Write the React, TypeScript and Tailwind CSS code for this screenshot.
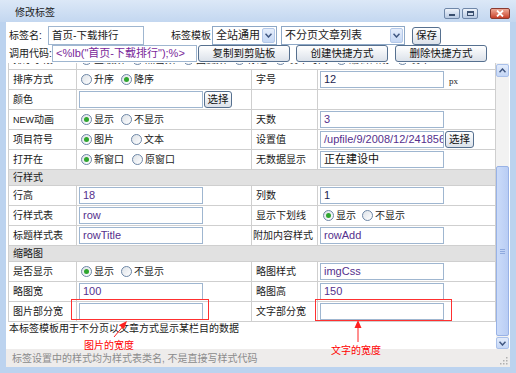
import React from 'react'

// shared bits
function Radio({ on }: { on?: boolean }) {
  return (
    <span className="inline-flex h-[11px] w-[11px] shrink-0 items-center justify-center rounded-full border border-[#6e87a6] bg-linear-to-br from-[#dde2e8] to-white">
      {on && <span className="h-[5px] w-[5px] rounded-full bg-[#2fa62f]" />}
    </span>
  )
}

function Opt({ on, label, space = 'mr-[7px]' }: { on?: boolean; label: string; space?: string }) {
  return (
    <span className={`flex items-center ${space}`}>
      <Radio on={on} />
      <span className="ml-[2px] whitespace-nowrap">{label}</span>
    </span>
  )
}

function Inp({ v = '', w = 'w-[124px]', color = 'text-[#55308d]' }: { v?: string; w?: string; color?: string }) {
  return (
    <div className={`${w} flex h-[17px] shrink-0 items-center overflow-hidden whitespace-nowrap border border-[#9fb6d0] bg-white px-[3px] font-['Liberation_Sans','Noto_Sans_CJK_SC',sans-serif] text-[11px] ${color}`}>
      {v}
    </div>
  )
}

function Btn({ children, w, h = 'h-[17px]' }: { children: React.ReactNode; w: string; h?: string }) {
  return (
    <div className={`${w} ${h} flex shrink-0 items-center justify-center rounded-[3px] border border-[#56708f] bg-linear-to-b from-white to-[#dce2ea] text-[10.5px] text-[#111]`}>
      {children}
    </div>
  )
}

function Chevron({ up }: { up?: boolean }) {
  return (
    <svg width="7" height="5" viewBox="0 0 7 5">
      <path d={up ? 'M0.5 4.2 L3.5 1 L6.5 4.2' : 'M0.5 0.8 L3.5 4 L6.5 0.8'} stroke="#3f5680" strokeWidth="1.5" fill="none" />
    </svg>
  )
}

function Select({ text, w }: { text: string; w: string }) {
  return (
    <div className={`${w} flex h-[19px] shrink-0 items-center border border-[#8ea8c6] bg-white text-[11px]`}>
      <span className="flex-1 overflow-hidden whitespace-nowrap pl-[3px]">{text}</span>
      <span className="mr-[1px] flex h-[15px] w-[13px] items-center justify-center rounded-[2px] border border-[#b4c8e8] bg-linear-to-b from-[#e6eefb] to-[#c5d7f4]">
        <Chevron />
      </span>
    </div>
  )
}

const td = 'border border-[#cfcfcf] p-0 h-[20px] align-middle'
const lab = `${td} pl-[4px] whitespace-nowrap`
const head = 'border border-[#cfcfcf] p-0 pl-[4px] h-[15px] bg-[#e1e1e1] align-middle'

export default function App() {
  return (
    <div className="relative flex h-[373px] w-[516px] flex-col overflow-hidden bg-[#bcd3ef] font-['Liberation_Sans','Noto_Sans_CJK_SC',sans-serif] text-[10px] text-[#1a1a1a]">
      {/* title bar */}
      <div className="flex h-[22px] shrink-0 items-start justify-between bg-linear-to-b from-[#dce8f7] to-[#c3d7f0]">
        <span className="ml-[15px] mt-[5px] text-[10px] text-[#1e1e1e]">修改标签</span>
        <div className="mr-[6px] mt-[8px] flex gap-[2px]">
          <div className="flex h-[11px] w-[16px] items-end justify-center rounded-[2px] border border-[#6f87a8] bg-linear-to-b from-[#eef3fa] to-[#b8cae3] pb-[2px]">
            <span className="h-[2px] w-[6px] bg-[#3a4f6e]" />
          </div>
          <div className="flex h-[11px] w-[16px] items-center justify-center rounded-[2px] border border-[#6f87a8] bg-linear-to-b from-[#eef3fa] to-[#b8cae3]">
            <span className="h-[5px] w-[7px] border border-t-2 border-[#3a4f6e]" />
          </div>
          <div className="ml-[10px] flex h-[11px] w-[20px] items-center justify-center rounded-[2px] border border-[#8a3a30] bg-linear-to-b from-[#eeaa98] to-[#c73d28]">
            <svg width="8" height="7" viewBox="0 0 8 7">
              <path d="M1 0.5 L7 6.5 M7 0.5 L1 6.5" stroke="#fff" strokeWidth="1.8" />
            </svg>
          </div>
        </div>
      </div>

      {/* window body */}
      <div className="mx-[6px] mb-[6px] flex flex-1 flex-col bg-white">
        <div className="flex h-[41px] shrink-0 flex-col pt-[4px]">
          <div className="flex h-[19px] items-center">
            <span className="ml-[3px] w-[39px]">标签名:</span>
            <div className="flex h-[19px] w-[96px] items-center border border-[#9fb6d0] px-[3px] text-[10.5px]">首页-下载排行</div>
            <span className="ml-[27px] w-[40px]">标签模板</span>
            <span className="ml-[1px]"><Select text="全站通用" w="w-[65px]" /></span>
            <span className="ml-[4px]"><Select text="不分页文章列表" w="w-[124px]" /></span>
            <span className="ml-[7px]"><Btn w="w-[29px]" h="h-[18px]">保存</Btn></span>
          </div>
          <div className="flex h-[17px] items-center">
            <span className="ml-[3px] w-[43px]">调用代码:</span>
            <Inp v={'<%lb("首页-下载排行");%>'} w="w-[145px]" color="text-[#7a1f9a]" />
            <span className="ml-[1px]"><Btn w="w-[92px]">复制到剪贴板</Btn></span>
            <span className="ml-[6px]"><Btn w="w-[92px]">创建快捷方式</Btn></span>
            <span className="ml-[7px]"><Btn w="w-[92px]">删除快捷方式</Btn></span>
          </div>
        </div>

        {/* scrolling settings area */}
        <div className="flex h-[286px] shrink-0">
          <div className="flex-1 overflow-hidden pl-[2px]">
            <table className="-mt-[14px] w-[487px] table-fixed border-collapse">
              <colgroup>
                <col className="w-[68px]" />
                <col className="w-[175px]" />
                <col className="w-[66px]" />
                <col className="w-[178px]" />
              </colgroup>
              <tbody>
                <tr>
                  <td className={lab}>排序字段</td>
                  <td className={td} colSpan={3}>
                    <div className="flex items-center pl-[4px]">
                      <Opt label="星级数" space="mr-[8px]" />
                      <Opt label="点击数" space="mr-[8px]" />
                      <Opt label="回复数" space="mr-[8px]" />
                      <Opt label="标题" space="mr-[8px]" />
                      <Opt label="发布时间" space="mr-[8px]" />
                      <Opt label="编辑日期" space="mr-[8px]" />
                      <Opt label="发布人" />
                    </div>
                  </td>
                </tr>
                <tr>
                  <td className={lab}>排序方式</td>
                  <td className={td}>
                    <div className="flex items-center pl-[4px]"><Opt label="升序" /><Opt on label="降序" /></div>
                  </td>
                  <td className={lab}>字号</td>
                  <td className={td}>
                    <div className="flex items-center pl-[2px]">
                      <Inp v="12" color="text-[#1c2350]" />
                      <span className="ml-[5px] mt-[5px] font-['Liberation_Serif',serif] text-[9px]">px</span>
                    </div>
                  </td>
                </tr>
                <tr>
                  <td className={lab}>颜色</td>
                  <td className={td}>
                    <div className="flex items-center pl-[2px]">
                      <Inp />
                      <span className="ml-[1px]"><Btn w="w-[28px]">选择</Btn></span>
                    </div>
                  </td>
                  <td className={td} />
                  <td className={td} />
                </tr>
                <tr>
                  <td className={lab}><span className="text-[9px]">NEW</span>动画</td>
                  <td className={td}>
                    <div className="flex items-center pl-[4px]"><Opt on label="显示" /><Opt label="不显示" /></div>
                  </td>
                  <td className={lab}>天数</td>
                  <td className={td}><div className="pl-[2px]"><Inp v="3" /></div></td>
                </tr>
                <tr>
                  <td className={lab}>项目符号</td>
                  <td className={td}>
                    <div className="flex items-center pl-[4px]"><Opt on label="图片" space="mr-[17px]" /><Opt label="文本" /></div>
                  </td>
                  <td className={lab}>设置值</td>
                  <td className={td}>
                    <div className="flex items-center pl-[2px]">
                      <Inp v="/upfile/9/2008/12/24185600.gif" />
                      <span className="ml-[1px]"><Btn w="w-[29px]">选择</Btn></span>
                    </div>
                  </td>
                </tr>
                <tr>
                  <td className={lab}>打开在</td>
                  <td className={td}>
                    <div className="flex items-center pl-[4px]"><Opt on label="新窗口" space="mr-[8px]" /><Opt label="原窗口" /></div>
                  </td>
                  <td className={lab}>无数据显示</td>
                  <td className={td}><div className="pl-[2px]"><Inp v="正在建设中" color="text-[#111]" /></div></td>
                </tr>
                <tr>
                  <td className={head} colSpan={4}>行样式</td>
                </tr>
                <tr>
                  <td className={lab}>行高</td>
                  <td className={td}><div className="pl-[2px]"><Inp v="18" /></div></td>
                  <td className={lab}>列数</td>
                  <td className={td}><div className="pl-[2px]"><Inp v="1" color="text-[#1c2350]" /></div></td>
                </tr>
                <tr>
                  <td className={lab}>行样式表</td>
                  <td className={td}><div className="pl-[2px]"><Inp v="row" /></div></td>
                  <td className={lab}>显示下划线</td>
                  <td className={td}>
                    <div className="flex items-center pl-[5px]"><Opt on label="显示" space="mr-[6px]" /><Opt label="不显示" /></div>
                  </td>
                </tr>
                <tr>
                  <td className={lab}>标题样式表</td>
                  <td className={td}><div className="pl-[2px]"><Inp v="rowTitle" /></div></td>
                  <td className={`${td} whitespace-nowrap pl-[1px]`}>附加内容样式</td>
                  <td className={td}><div className="pl-[2px]"><Inp v="rowAdd" /></div></td>
                </tr>
                <tr>
                  <td className={head} colSpan={4}>缩略图</td>
                </tr>
                <tr>
                  <td className={lab}>是否显示</td>
                  <td className={td}>
                    <div className="flex items-center pl-[4px]"><Opt on label="显示" /><Opt label="不显示" /></div>
                  </td>
                  <td className={lab}>略图样式</td>
                  <td className={td}><div className="pl-[2px]"><Inp v="imgCss" /></div></td>
                </tr>
                <tr>
                  <td className={lab}>略图宽</td>
                  <td className={td}><div className="pl-[2px]"><Inp v="100" /></div></td>
                  <td className={lab}>略图高</td>
                  <td className={td}><div className="pl-[2px]"><Inp v="150" /></div></td>
                </tr>
                <tr>
                  <td className={lab}>图片部分宽</td>
                  <td className={td}><div className="pl-[2px]"><Inp /></div></td>
                  <td className={lab}>文字部分宽</td>
                  <td className={td}><div className="pl-[2px]"><Inp /></div></td>
                </tr>
              </tbody>
            </table>
            <div className="pl-[1px] pt-[1px] leading-[12px]">本标签模板用于不分页以文章方式显示某栏目的数据</div>
          </div>

          {/* scrollbar */}
          <div className="mr-[1px] flex w-[13px] flex-col bg-[#f2f2f2] pt-[1px]">
            <div className="flex h-[13px] items-center justify-center rounded-[2px] border border-[#a9c0ea] bg-linear-to-b from-[#e3ecfb] to-[#c4d6f6]">
              <Chevron up />
            </div>
            <div className="h-[89px]" />
            <div className="flex h-[170px] items-center justify-center rounded-[2px] border border-[#98b2e6] bg-linear-to-r from-[#cbdbf9] to-[#b9cdf4]">
              <div className="flex flex-col gap-[1px]">
                <span className="h-px w-[5px] bg-[#8ea9de]" />
                <span className="h-px w-[5px] bg-[#8ea9de]" />
                <span className="h-px w-[5px] bg-[#8ea9de]" />
              </div>
            </div>
            <div className="mt-[1px] flex h-[12px] items-center justify-center rounded-[2px] border border-[#a9c0ea] bg-linear-to-b from-[#e3ecfb] to-[#c4d6f6]">
              <Chevron />
            </div>
          </div>
        </div>

        {/* footer */}
        <div className="flex h-[18px] shrink-0 items-center justify-between bg-[#eeeceb] pl-[6px] text-[#8b8b8b]">
          <span>标签设置中的样式均为样式表类名, 不是直接写样式代码</span>
          <svg width="8" height="8" viewBox="0 0 8 8" className="mr-[2px] mt-[6px]">
            <rect x="6" y="6" width="1.5" height="1.5" fill="#b0b0b0" />
            <rect x="3" y="6" width="1.5" height="1.5" fill="#b0b0b0" />
            <rect x="6" y="3" width="1.5" height="1.5" fill="#b0b0b0" />
            <rect x="0" y="6" width="1.5" height="1.5" fill="#b0b0b0" />
            <rect x="3" y="3" width="1.5" height="1.5" fill="#b0b0b0" />
            <rect x="6" y="0" width="1.5" height="1.5" fill="#b0b0b0" />
          </svg>
        </div>
      </div>

      {/* red annotations drawn over the dialog */}
      <div className="pointer-events-none absolute left-[71px] top-[299px] h-[21px] w-[138px] border border-[#ff3030]" />
      <div className="pointer-events-none absolute left-[315px] top-[299px] h-[22px] w-[137px] border border-[#ff3030]" />
      <span className="absolute left-[84px] top-[338px] text-[10px] text-[#ff0000]">图片的宽度</span>
      <span className="absolute left-[331px] top-[343px] text-[10px] text-[#ff0000]">文字的宽度</span>
      <svg className="pointer-events-none absolute left-0 top-0" width="516" height="373">
        <path d="M114 337 L125 324" stroke="#ff2020" strokeWidth="1" />
        <path d="M127 321 L119 325 L124 329 Z" fill="#ff2020" />
        <path d="M358 342 L358 326" stroke="#ff2020" strokeWidth="1" />
        <path d="M358 320 L354.5 328 L361.5 328 Z" fill="#ff2020" />
      </svg>
    </div>
  )
}
